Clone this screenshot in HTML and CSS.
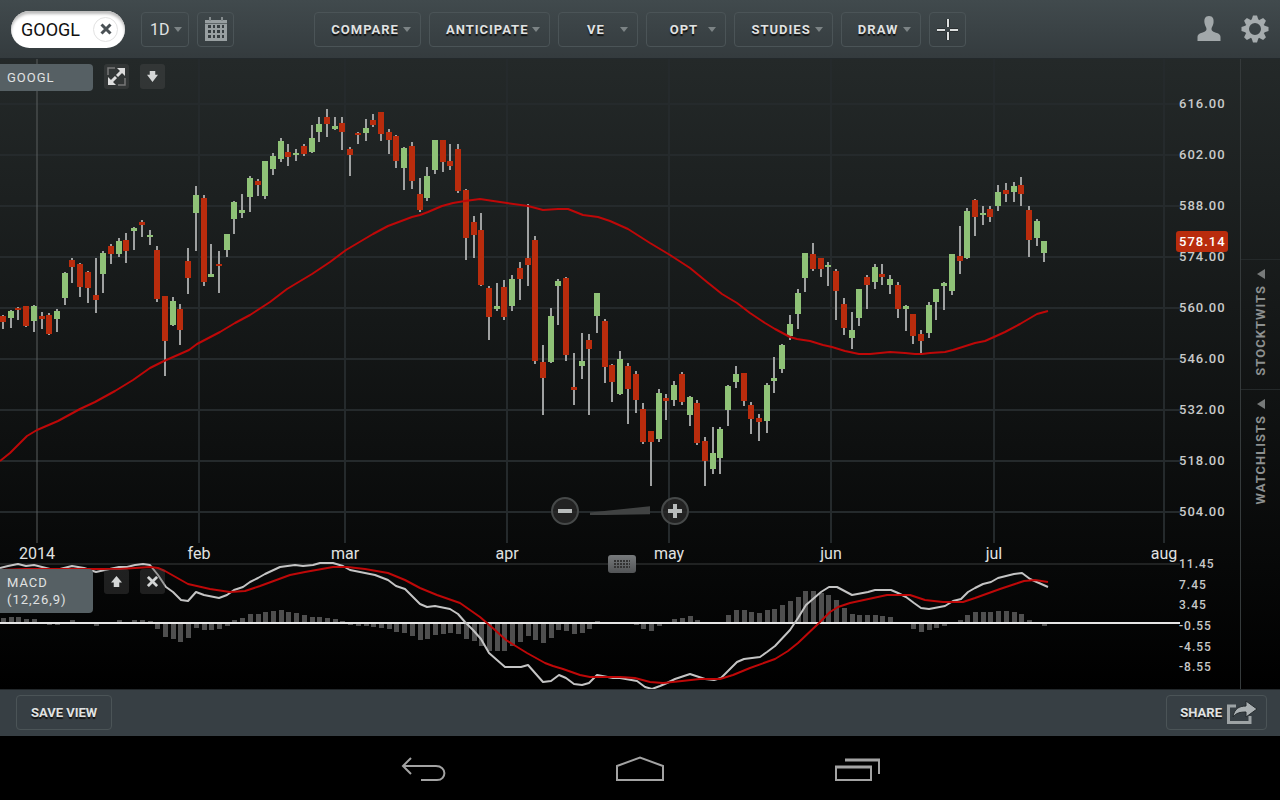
FILE: index.html
```
<!DOCTYPE html>
<html lang="en">
<head>
    <meta charset="UTF-8">
    <meta name="viewport" content="width=device-width, initial-scale=1.0">
    <title>GOOGL Chart</title>
    <link rel="stylesheet" href="styles.css">
</head>
<body>

    <header class="topbar">
        <div class="group">
            <div class="symbol">
                <input type="text" value="GOOGL" aria-label="Symbol">
                <button class="clear" aria-label="Clear symbol">
                    <svg width="12" height="12" viewBox="0 0 12 12"><path d="M1.5 1.5L10.5 10.5M10.5 1.5L1.5 10.5" stroke="#4a5155" stroke-width="3"/></svg>
                </button>
            </div>
            <label class="btn period">
                <select aria-label="Period">
                    <option>1D</option>
                    <option>1W</option>
                    <option>1M</option>
                </select>
                <i class="caret"></i>
            </label>
            <button class="btn square" aria-label="Date range">
                <svg width="22" height="24" viewBox="0 0 22 24">
                    <path d="M0 3H22V24H0Z" fill="#989fa1"/>
                    <path d="M5 0V4M17 0V4" stroke="#858c8e" stroke-width="2"/>
                    <path d="M0 6.5H22" stroke="#5e6567"/>
                    <path d="M3 8h3v3h-3zM8 8h2v3h-2zM12 8h3v3h-3zM17 8h2v3h-2zM3 13h3v3h-3zM8 13h2v3h-2zM12 13h3v3h-3zM17 13h2v3h-2zM3 18h3v3h-3zM8 18h2v3h-2zM12 18h3v3h-3zM17 18h2v3h-2z" fill="#363d40"/>
                </svg>
            </button>
        </div>

        <nav class="group tools">
            <button class="btn menu"><span>COMPARE</span><i class="caret"></i></button>
            <button class="btn menu"><span>ANTICIPATE</span><i class="caret"></i></button>
            <button class="btn menu"><span>VE</span><i class="caret"></i></button>
            <button class="btn menu"><span>OPT</span><i class="caret"></i></button>
            <button class="btn menu"><span>STUDIES</span><i class="caret"></i></button>
            <button class="btn menu"><span>DRAW</span><i class="caret"></i></button>
            <button class="btn square" aria-label="Crosshair">
                <svg width="23" height="23" viewBox="0 0 23 23"><path d="M12 1V9M12 14V22M1 12H9M14 12H22" stroke="#111" stroke-width="4" opacity=".4"/><path d="M12 1V9M12 14V22M1 12H9M14 12H22" stroke="#dcdfdf" stroke-width="2"/></svg>
            </button>
        </nav>

        <div class="group account">
            <button class="plain" aria-label="Account">
                <svg width="24" height="26" viewBox="0 0 24 26"><path d="M12 0C8 0 7 3 7.500 7C8 10 9.500 11 9.500 13C9.500 15.500 7 16 4 17C1.500 18 0.500 19 0.500 21V25H23.500V21C23.500 19 22.500 18 20 17C17 16 14.500 15.500 14.500 13C14.500 11 16 10 16.500 7C17 3 16 0 12 0Z" fill="#a2a8aa"/></svg>
            </button>
            <button class="plain" aria-label="Settings">
                <svg width="28" height="28" viewBox="-14 -14 28 28">
                    <g fill="#a6acae">
                        <path id="tooth" d="M-3.500 -9L-2 -13.500H2L3.500 -9Z"/>
                        <use href="#tooth" transform="rotate(45)"/><use href="#tooth" transform="rotate(90)"/><use href="#tooth" transform="rotate(135)"/><use href="#tooth" transform="rotate(180)"/><use href="#tooth" transform="rotate(225)"/><use href="#tooth" transform="rotate(270)"/><use href="#tooth" transform="rotate(315)"/>
                    </g>
                    <circle r="8" fill="none" stroke="#a6acae" stroke-width="4"/>
                </svg>
            </button>
        </div>
    </header>

    <main class="workspace">
        <section class="chart">
            <svg id="plot" viewBox="0 59 1240 630" role="img" aria-label="GOOGL daily price with MACD"></svg>

            <div class="panel-head price-head">
                <div class="tag">GOOGL</div>
                <button class="mini" aria-label="Expand">
                    <svg width="19" height="19" viewBox="0 0 19 19"><path d="M1 8V1H8M18 11V18H11" fill="none" stroke="#777" stroke-width="1.500"/><path d="M4.500 14.500L14.500 4.500" stroke="#ddd" stroke-width="3"/><path d="M10 1H18V9ZM1 10V18H9Z" fill="#ddd"/><path d="M7 7L12 12" stroke="#343838" stroke-width="1.500"/></svg>
                </button>
                <button class="mini" aria-label="Move down">
                    <svg width="11" height="13" viewBox="0 0 12 14"><path d="M3 1H9V5H12L6 13L0 5H3Z" fill="#d4d6d6"/></svg>
                </button>
            </div>

            <div class="panel-head macd-head">
                <div class="tag">MACD<br>(12,26,9)</div>
                <button class="mini" aria-label="Move up">
                    <svg width="11" height="13" viewBox="0 0 12 14"><path d="M6 1L12 8H9V13H3V8H0Z" fill="#d4d6d6"/></svg>
                </button>
                <button class="mini" aria-label="Remove study">
                    <svg width="11" height="11" viewBox="0 0 12 12"><path d="M1 1L11 11M11 1L1 11" stroke="#d4d6d6" stroke-width="3"/></svg>
                </button>
            </div>

            <div class="zoom">
                <button class="round" aria-label="Zoom out"><svg width="14" height="14" viewBox="0 0 14 14"><path d="M0 7H14" stroke="#b8bbbb" stroke-width="4"/></svg></button>
                <input type="range" aria-label="Zoom level">
                <button class="round" aria-label="Zoom in"><svg width="14" height="14" viewBox="0 0 14 14"><path d="M0 7H14M7 0V14" stroke="#b8bbbb" stroke-width="4"/></svg></button>
            </div>

            <button class="grip" aria-label="Resize panels">
                <svg width="16" height="8" viewBox="0 0 16 8"><path d="M0 1H16M0 4H16M0 7H16" stroke="#333" stroke-width="2" stroke-dasharray="2 1"/></svg>
            </button>
        </section>

        <aside class="side">
            <button class="tab"><span>STOCKTWITS</span><i></i></button>
            <button class="tab"><span>WATCHLISTS</span><i></i></button>
        </aside>
    </main>

    <footer class="bottombar">
        <button class="btn">SAVE VIEW</button>
        <button class="btn share">SHARE
            <svg width="31" height="24" viewBox="0 0 31 24"><path d="M9 6H1.500V22.500H23V16" fill="none" stroke="#9da3a5" stroke-width="3"/><path d="M6 17C7 9 12 6 19 6V1L30 9L19 17V12C13 12 9 13 6 17Z" fill="#aab0b2" stroke="#252b2e"/></svg>
        </button>
    </footer>

    <nav class="system">
        <button aria-label="Back"><svg width="46" height="26" viewBox="0 0 46 26"><path d="M11 2L3 10L11 18M3 10H36C47 10 47 24 37 24H21" fill="none" stroke="#a3a3a3" stroke-width="2"/></svg></button>
        <button aria-label="Home"><svg width="48" height="26" viewBox="0 0 48 26"><path d="M1 10L24 1.500L47 10V24H1Z" fill="none" stroke="#a3a3a3" stroke-width="2"/></svg></button>
        <button aria-label="Recent apps"><svg width="46" height="26" viewBox="0 0 46 26"><path d="M2 11H37V24H2Z" fill="none" stroke="#a3a3a3" stroke-width="2"/><path d="M1 11H38" stroke="#a3a3a3" stroke-width="3"/><path d="M11 4H46" stroke="#a3a3a3" stroke-width="3"/><path d="M45 4V18" stroke="#a3a3a3" stroke-width="2"/></svg></button>
    </nav>

    <script src="chart.js"></script>
</body>
</html>
```
FILE: styles.css
```
* {
    box-sizing: border-box;
}
body {
    margin: 0;
    min-height: 100vh;
    display: flex;
    flex-direction: column;
    background-color: #000;
    color: #e0e2e2;
    font-family: Roboto, "Liberation Sans", sans-serif;
    font-size: 13px;
}
button, input, select {
    font: inherit;
    color: inherit;
    margin: 0;
    padding: 0;
    border: none;
    background: none;
}
svg {
    display: block;
}

/* top toolbar */
.topbar {
    display: grid;
    grid-template-columns: 1fr auto 1fr;
    align-items: center;
    height: 59px;
    padding: 0 11px;
    background: linear-gradient(#414a4d, #343b3e);
    border-bottom: 1px solid #23292c;
}
.group {
    display: flex;
    align-items: center;
    gap: 8px;
}
.account {
    justify-content: flex-end;
    gap: 20px;
}
.symbol {
    display: flex;
    align-items: center;
    width: 114px;
    height: 37px;
    margin-right: 8px;
    padding: 0 7px 0 10px;
    border-radius: 19px;
    background-color: #fff;
    box-shadow: inset 0 3px 3px #bbb;
    color: #111;
}
.symbol input {
    flex: 1;
    min-width: 0;
    font-size: 18px;
}
.clear {
    display: flex;
    align-items: center;
    justify-content: center;
    width: 25px;
    height: 25px;
    border: 1px solid #e2e2e2;
    border-radius: 50%;
}
.btn {
    display: flex;
    align-items: center;
    justify-content: center;
    height: 35px;
    padding: 0 14px;
    border: 1px solid #4b5457;
    border-radius: 4px;
    font-weight: bold;
    text-shadow: 0 2px 1px #111;
}
.period {
    gap: 4px;
    padding: 0 6px 0 8px;
    font-weight: normal;
    font-size: 16px;
}
.period select {
    width: 20px;
    appearance: none;
}
.square {
    width: 37px;
    padding: 0;
}
.menu {
    gap: 4px;
    min-width: 80px;
    padding: 0 9px 0 16px;
    letter-spacing: 1px;
}
.menu span {
    flex: 1;
    text-align: center;
}
.caret {
    border: 4px solid transparent;
    border-top: 5px solid #7c8385;
    border-bottom: 0;
}

/* chart */
.workspace {
    display: flex;
    background: linear-gradient(#242929, #000);
}
.chart {
    flex: 1;
    position: relative;
}
.chart > svg {
    width: 100%;
    height: auto;
}
.panel-head {
    position: absolute;
    left: 0;
    display: flex;
    align-items: flex-start;
    gap: 11px;
}
.price-head {
    top: 5px;
}
.macd-head {
    top: 81%;
}
.tag {
    width: 93px;
    padding: 5px 7px;
    background-color: #566064;
    border-radius: 0 4px 4px 0;
    letter-spacing: 1px;
    line-height: 17px;
}
.mini {
    display: flex;
    align-items: center;
    justify-content: center;
    width: 25px;
    height: 25px;
    border-radius: 3px;
    background-color: rgba(80, 80, 80, 0.35);
}
.zoom {
    position: absolute;
    top: 69%;
    left: 0;
    right: 0;
    display: flex;
    align-items: center;
    justify-content: center;
    gap: 11px;
    margin-top: 3px;
}
.round {
    display: flex;
    align-items: center;
    justify-content: center;
    width: 28px;
    height: 28px;
    border: 2px solid #464949;
    border-radius: 50%;
    background-color: rgba(40, 40, 40, 0.8);
}
.zoom input {
    appearance: none;
    width: 60px;
    height: 9px;
    background-color: #414343;
    clip-path: polygon(0 70%, 100% 0, 100% 90%, 0 100%);
}
.zoom input::-webkit-slider-thumb {
    appearance: none;
    width: 1px;
}
.grip {
    position: absolute;
    top: 79%;
    left: 50%;
    margin-left: -12px;
    margin-top: -2px;
    display: flex;
    align-items: center;
    justify-content: center;
    width: 28px;
    height: 18px;
    border-radius: 3px;
    background: linear-gradient(#777a7c, #525456);
}

/* plot */
.grid {
    stroke: #252a2c;
    stroke-width: 2;
}
.year {
    stroke: #5b5f5f;
}
.divider {
    stroke: #3a3c3c;
}
.wick {
    stroke: #9fa1a1;
    stroke-width: 2;
}
.up {
    fill: #8fc277;
}
.down {
    fill: #b92c0d;
}
.bar {
    fill: #4f4f4f;
}
.zero {
    stroke: #e6e6e6;
    stroke-width: 2;
}
.line {
    fill: none;
    stroke: #be0808;
    stroke-width: 2;
    stroke-linejoin: round;
}
.macd {
    stroke: #c4c4c4;
}
.axis {
    fill: #c8caca;
    font-size: 13px;
    font-weight: 500;
    letter-spacing: 1px;
}
.level {
    font-size: 12px;
}
.month {
    fill: #e0e2e2;
    font-size: 16px;
    text-anchor: middle;
}
.last {
    fill: #fff;
}

/* side tabs */
.side {
    display: flex;
    flex-direction: column;
    width: 40px;
    padding-top: 200px;
    border-left: 1px solid #353a3b;
}
.tab {
    display: flex;
    flex-direction: column-reverse;
    align-items: center;
    justify-content: flex-end;
    gap: 6px;
    height: 130px;
    padding-top: 9px;
    border-top: 1px solid #24292a;
    color: #8d9090;
    font-weight: bold;
    letter-spacing: 1px;
}
.tab span {
    writing-mode: vertical-rl;
    transform: rotate(180deg);
}
.tab i {
    border: 5px solid transparent;
    border-right: 8px solid #777a7a;
    border-left: 0;
}

/* bottom bars */
.bottombar {
    display: flex;
    align-items: center;
    justify-content: space-between;
    height: 47px;
    padding: 0 13px 2px 16px;
    background-color: #373f44;
    border-top: 1px solid #23282b;
}
.share {
    gap: 5px;
    padding: 0 8px 0 13px;
}
.system {
    flex: 1;
    display: flex;
    align-items: center;
    justify-content: center;
    min-height: 64px;
    padding-top: 2px;
}
.system button {
    display: flex;
    justify-content: center;
    width: 217px;
}
```
FILE: chart.js
```
// high, body top, body bottom, low, up (1) or down (0)
const candles = [
    [315,316,322,329,0],[310,311,318,328,1],[307,308,310,320,0],[306,306,326,327,0],[305,306,321,332,1],
    [312,316,319,329,0],[313,315,334,335,0],[309,311,319,332,1],[272,273,298,305,1],[258,260,267,283,0],
    [263,264,287,297,0],[271,272,288,303,0],[258,295,300,313,0],[251,253,274,293,1],[244,246,254,264,0],
    [238,241,254,257,1],[233,240,251,263,0],[227,228,231,250,1],[220,222,225,237,0],[230,235,237,245,1],
    [246,250,299,302,0],[296,296,341,376,0],[297,301,325,326,1],[304,309,330,345,0],[248,261,278,294,0],
    [186,195,213,251,1],[195,198,282,286,0],[244,274,277,277,1],[251,264,266,293,0],[234,234,250,257,1],
    [201,202,219,234,1],[194,210,213,218,1],[176,178,197,212,1],[179,181,185,196,0],[161,161,196,199,1],
    [153,156,169,175,1],[138,141,159,162,1],[144,152,157,166,0],[149,153,155,161,1],[144,146,154,156,0],
    [125,138,152,153,1],[117,124,132,142,1],[109,117,124,137,0],[117,126,129,130,1],[117,123,132,150,0],
    [147,149,155,176,0],[132,133,135,144,0],[119,128,133,141,1],[114,120,125,127,0],[112,112,134,141,0],
    [129,132,140,154,0],[135,136,161,168,0],[147,148,168,190,1],[142,146,181,189,0],[178,194,210,212,0],
    [167,176,198,201,1],[140,140,170,174,1],[140,140,162,172,0],[144,161,166,170,0],[144,149,191,193,0],
    [189,190,238,260,0],[216,222,235,258,0],[213,230,285,286,0],[286,288,317,340,0],[283,306,309,311,1],
    [280,287,317,320,0],[275,279,306,311,1],[262,268,279,300,0],[204,258,265,286,0],[236,240,361,364,0],
    [345,362,378,415,0],[308,316,362,363,1],[279,281,286,325,1],[277,278,355,361,0],[353,387,390,405,0],
    [333,361,366,379,1],[334,340,349,415,0],[293,293,316,333,1],[319,321,367,383,0],[364,365,382,402,0],
    [351,359,394,395,1],[363,366,389,424,0],[371,374,400,413,0],[403,409,442,444,0],[431,431,442,486,0],
    [389,393,439,442,1],[394,398,401,420,0],[381,385,400,406,1],[372,374,402,405,0],[396,397,415,426,1],
    [400,403,443,445,0],[437,441,461,486,0],[427,453,469,474,1],[427,429,458,474,1],[385,386,410,426,1],
    [366,374,382,388,1],[373,373,401,406,0],[402,405,419,434,0],[414,418,422,441,0],[383,385,421,433,1],
    [357,378,381,393,1],[344,345,369,373,1],[315,324,336,340,1],[289,293,314,329,1],[253,253,278,292,1],
    [243,254,269,271,0],[258,258,269,277,0],[262,265,267,286,1],[269,271,291,320,0],[298,304,328,335,0],
    [312,330,338,349,1],[289,289,318,326,1],[275,277,285,309,0],[264,267,282,289,1],[264,274,277,285,0],
    [275,279,285,294,1],[282,285,309,318,0],[305,306,309,331,1],[314,314,336,344,0],[330,334,341,354,0],
    [302,305,333,338,1],[289,289,302,320,1],[282,283,286,310,1],[254,254,291,295,1],[226,256,261,274,0],
    [208,211,258,259,1],[199,200,217,236,0],[206,213,215,225,1],[206,209,217,222,0],[185,192,206,211,1],
    [183,190,194,202,0],[182,186,192,202,1],[177,185,194,206,0],[206,210,240,257,0],[219,221,238,246,1],
    [241,241,253,262,1]
];

const histogram = [
    4,5,5,3,3,0,-2,-2,0,2,0,0,-3,0,0,2,0,2,2,1,-6,-14,-16,-19,-15,-5,-7,-7,-6,-3,
    2,4,8,8,10,11,12,10,9,7,5,5,4,3,1,-2,-3,-3,-4,-5,-6,-9,-10,-13,-17,-16,-12,-11,-10,-11,
    -16,-18,-23,-28,-28,-28,-23,-19,-13,-17,-20,-15,-7,-8,-11,-10,-6,1,0,-1,0,0,-2,-6,-8,-3,0,3,4,6,
    2,0,0,0,7,12,12,10,9,12,13,17,21,25,31,31,29,27,22,14,8,7,7,7,6,5,0,-1,-6,-9,
    -7,-5,-3,0,2,7,10,10,10,11,11,10,8,2,0,-3
];

const average = "0,461 10,453 27,436 37,430 58,421 80,409 95,402 115,391 133,380 150,368 164,361 180,354 189,350 197,344 220,332 235,323 250,315 270,302 287,289 312,274 330,262 346,250 373,234 388,226 412,217 420,215 428,212 442,206 453,203 465,201 480,199 500,202 507,203 528,206 543,210 558,209 568,209 583,215 598,217 610,221 628,229 650,243 670,255 690,268 707,282 722,294 737,303 750,313 765,323 775,329 790,337 797,339 810,341 823,345 832,347 845,351 859,354 870,354 890,352 905,353 915,354 922,354 930,353 945,352 953,350 975,343 985,341 994,337 1005,332 1020,324 1037,314 1048,311";

const macd = "0,568 8,566 18,564 26,566 34,565 42,567 50,569 60,569 72,566 84,568 96,572 105,570 119,567 127,567 135,565 143,564 150,565 158,575 166,587 173,592 181,600 188,601 196,592 204,595 219,598 227,595 234,590 243,587 250,582 258,578 265,574 280,567 295,565 303,566 313,565 320,563 333,563 343,566 350,570 375,575 388,580 396,586 405,589 413,597 420,604 427,607 435,606 450,609 458,614 465,622 473,630 481,639 489,653 497,660 505,667 521,667 528,665 543,682 551,681 559,675 566,678 574,684 582,685 589,683 597,675 613,678 620,678 637,681 645,687 652,689 660,686 667,683 675,679 690,674 705,679 714,680 721,678 728,671 737,662 744,659 760,657 767,652 775,646 790,630 798,618 806,605 821,592 829,587 837,587 852,595 868,592 875,590 891,590 898,593 906,597 914,603 921,608 929,609 945,606 953,601 961,599 968,592 975,588 983,584 991,582 998,578 1014,574 1022,573 1030,579 1048,587";

const signal = "0,570 25,569 60,569 120,569 135,568 150,567 158,568 165,571 188,584 210,589 230,592 245,591 260,586 290,575 305,572 333,567 347,567 365,569 388,573 405,580 420,588 437,595 460,603 470,610 480,617 495,630 506,640 514,645 527,653 545,663 553,666 563,669 580,675 590,677 620,677 635,678 650,682 663,683 682,681 700,679 720,679 733,675 750,668 775,659 788,651 798,643 820,622 830,612 838,607 850,603 887,595 910,595 925,600 943,602 963,602 975,598 1000,589 1015,584 1024,581 1035,580 1048,582";

const prices = [[104,"616.00"],[155,"602.00"],[206,"588.00"],[257,"574.00"],[308,"560.00"],[359,"546.00"],[410,"532.00"],[461,"518.00"],[512,"504.00"]];
const levels = [[563,"11.45"],[584,"7.45"],[604,"3.45"],[625,"-0.55"],[646,"-4.55"],[666,"-8.55"]];
const months = [[37,"2014"],[199,"feb"],[345,"mar"],[507,"apr"],[669,"may"],[831,"jun"],[994,"jul"],[1164,"aug"]];

const step = 7.714;
let out = "";

function line(cls, x1, y1, x2, y2) {
    out += `<line class="${cls}" x1="${x1}" y1="${y1}" x2="${x2}" y2="${y2}"/>`;
}

prices.forEach(([y, label]) => {
    line("grid", 0, y, 1180, y);
    out += `<text class="axis" x="1179" y="${y + 4}">${label}</text>`;
});
months.forEach(([x, label]) => {
    line(label === "2014" ? "year" : "grid", x, 59, x, 543);
    out += `<text class="month" x="${x}" y="559">${label}</text>`;
});
levels.forEach(([y, label]) => {
    out += `<text class="axis level" x="1179" y="${y + 5}">${label}</text>`;
});
line("divider", 0, 564, 1180, 564);

candles.forEach(([high, top, bottom, low, up], i) => {
    const x = Math.round(3 + i * step);
    line("wick", x, high, x, low);
    out += `<rect class="${up ? "up" : "down"}" x="${x - 3}" y="${top}" width="6" height="${bottom - top}"/>`;
});
histogram.forEach((h, i) => {
    const x = Math.round(4 + i * step);
    out += `<rect class="bar" x="${x - 3}" y="${h > 0 ? 622 - h : 623}" width="5" height="${Math.abs(h)}"/>`;
});
line("zero", 0, 623, 1180, 623);

out += `<polyline class="line" points="${average}"/>`;
out += `<polyline class="line macd" points="${macd}"/>`;
out += `<polyline class="line" points="${signal}"/>`;

// last price
out += `<rect class="down" x="1176" y="231" width="52" height="21" rx="3"/><text class="axis last" x="1179" y="246">578.14</text>`;

document.getElementById("plot").innerHTML = out;
```
